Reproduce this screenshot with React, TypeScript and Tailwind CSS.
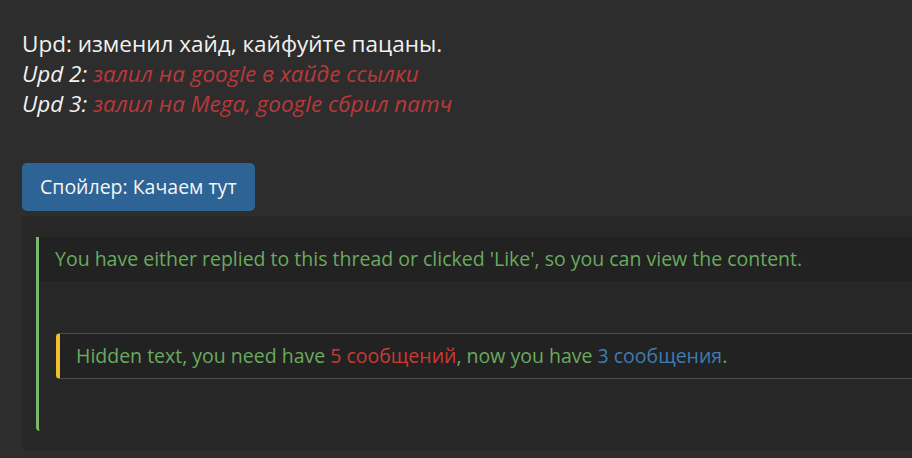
export default function App() {
  return (
    <div
      className="min-h-[458px] w-[912px] overflow-hidden bg-[#2d2d2d] pl-[22px] pt-[29px]"
      style={{ fontFamily: '"Open Sans", "Noto Sans", sans-serif' }}
    >
      {/* Post text */}
      <div className="text-[22.5px] leading-[30px] text-[#f2f2f2]">
        <div>Upd: изменил хайд, кайфуйте пацаны.</div>
        <div className="italic">
          Upd 2: <span className="text-[#b8393a]">залил на google в хайде ссылки</span>
        </div>
        <div className="italic">
          Upd 3: <span className="text-[#b8393a]">залил на Mega, google сбрил патч</span>
        </div>
      </div>

      {/* Spoiler */}
      <div className="mt-[44px]">
        <button className="h-[48px] w-[233px] rounded-[5px] bg-[#2e6395] pl-[18px] text-left text-[19.5px] text-[#f5f5f5]">
          Спойлер: Качаем тут
        </button>
        <div className="mt-[5px] rounded-bl-[5px] bg-[#272727] pb-[20px] pl-[14px] pt-[21px]">
          <div className="rounded-bl-[4px] border-l-[3px] border-[#7ab86d]">
            <div className="flex h-[44px] items-center whitespace-nowrap bg-[#222222] pl-[16px] text-[19.5px] text-[#6aaa5f]">
              You have either replied to this thread or clicked 'Like', so you can view the content.
            </div>
            <div className="pb-[52px] pl-[17px] pt-[52px]">
              <div className="flex h-[46px] items-center whitespace-nowrap rounded-l-[4px] border-y border-l-4 border-y-[#4d4d4d] border-l-[#f0c02e] bg-[#222222] pl-[16px] text-[19.5px] text-[#6aaa5f]">
                <span>
                  Hidden text, you need have <span className="text-[#c83b32]">5 сообщений</span>, now you have{' '}
                  <span className="text-[#3e7cb1]">3 сообщения</span>.
                </span>
              </div>
            </div>
          </div>
        </div>
      </div>
    </div>
  )
}
